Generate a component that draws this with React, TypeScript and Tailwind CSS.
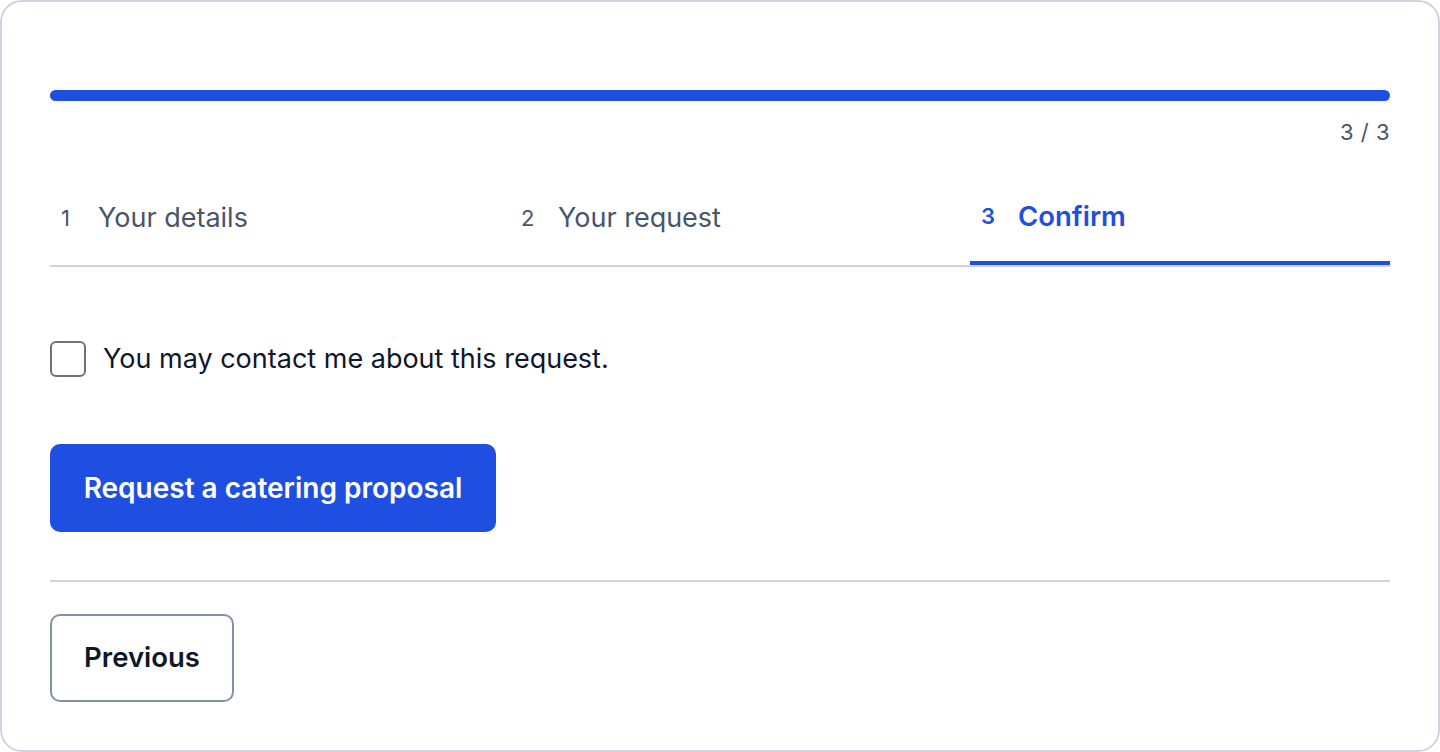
import React from "react";

export default function App() {
  const tabs = [
    { n: "1", label: "Your details", active: false },
    { n: "2", label: "Your request", active: false },
    { n: "3", label: "Confirm", active: true },
  ];
  return (
    <div
      className="w-[1440px] h-[752px] bg-white border-2 border-[#cbd5e1] rounded-[22px] px-[48px] pt-[88px] box-border"
      style={{ fontFamily: "Inter, 'Noto Sans', sans-serif" }}
    >
      <div className="h-[11px] w-full rounded-full bg-[#1f4fe0]" />
      <div className="mt-[18px] text-right text-[22px] leading-[26px] tracking-[0.5px] text-[#475569]">3 / 3</div>
      <div className="mt-[43px] grid grid-cols-3 gap-x-10 border-b-2 border-[#cbd5e1]">
        {tabs.map((t) => (
          <div
            key={t.n}
            className={
              "flex items-center h-[77px] pl-[11px] pb-[16px] " +
              (t.active ? "border-b-4 border-[#1f4fe0]" : "")
            }
          >
            <span
              className={
                "text-[22px] w-[37px] " +
                (t.active ? "text-[#1f4fe0] font-semibold" : "text-[#475569]")
              }
            >
              {t.n}
            </span>
            <span
              className={
                t.active
                  ? "text-[27.5px] text-[#1f4fe0] font-semibold"
                  : "text-[27px] text-[#475569]"
              }
            >
              {t.label}
            </span>
          </div>
        ))}
      </div>
      <label className="mt-[72px] flex items-center gap-[17px]">
        <span className="w-[36px] h-[36px] shrink-0 rounded-[6px] border-2 border-[#6b7280] bg-white box-border" />
        <span className="text-[27px] text-[#0f172a]">You may contact me about this request.</span>
      </label>
      <button className="mt-[64px] h-[88px] w-[446px] rounded-[10px] bg-[#1f4fe0] text-white text-[28px] font-semibold flex items-center justify-center">
        Request a catering proposal
      </button>
      <div className="mt-[48px] border-t-2 border-[#cbd5e1]" />
      <button className="mt-[32px] h-[88px] w-[184px] rounded-[10px] border-2 border-[#8391a7] bg-white text-[#0f172a] text-[27.5px] font-semibold flex items-center justify-center">
        Previous
      </button>
    </div>
  );
}
